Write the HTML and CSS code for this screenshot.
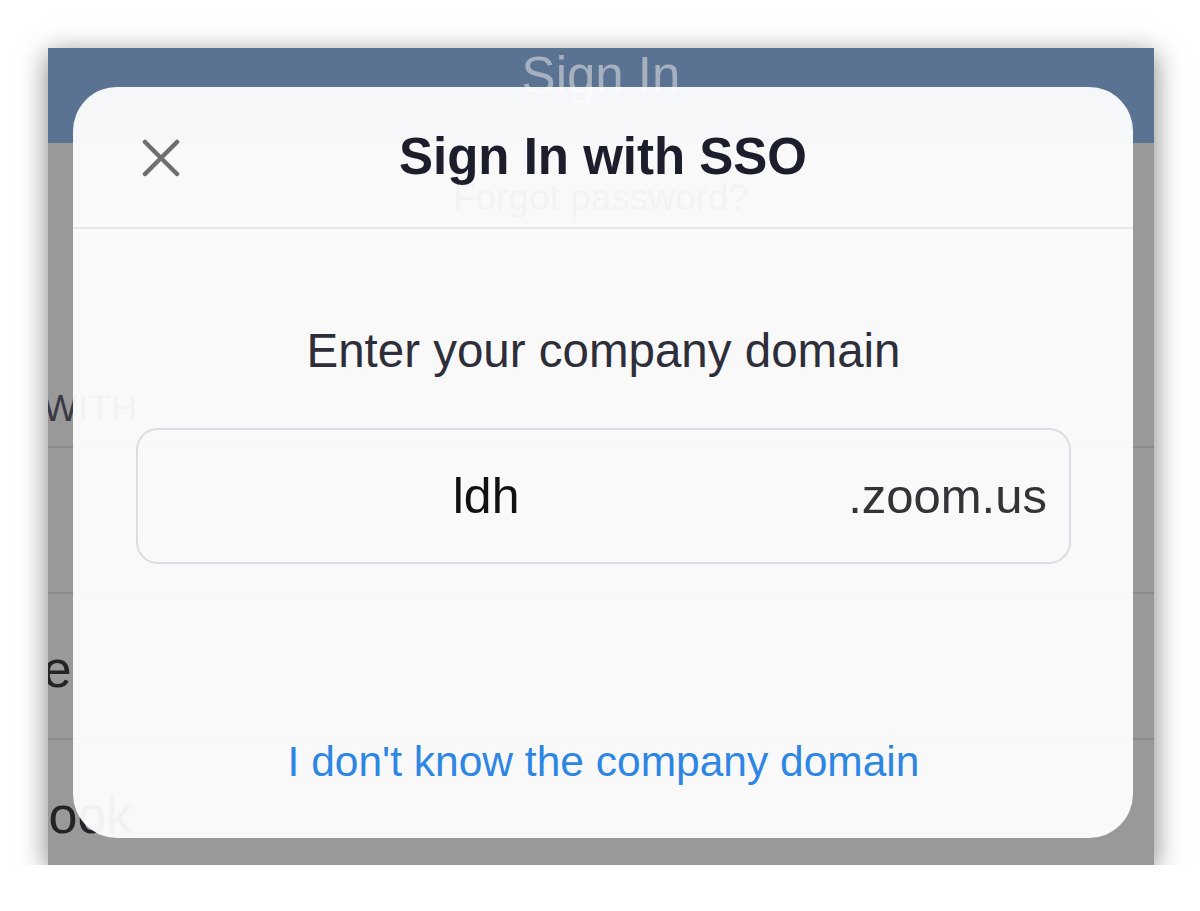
FILE: index.html
```html
<!DOCTYPE html>
<html lang="en">
<head>
<meta charset="utf-8">
<title>Sign In with SSO</title>
<link rel="stylesheet" href="styles.css">
</head>
<body>
<div class="shot">
  <div class="app">
    <header class="app-header"><span class="app-title">Sign In</span></header>
    <div class="app-body">
      <div class="forgot">Forgot password?</div>
      <div class="section-label">SIGN IN WITH</div>
      <ul class="options">
        <li class="option"><span>SSO</span></li>
        <li class="option"><span>Google</span></li>
        <li class="option"><span>Facebook</span></li>
      </ul>
    </div>
  </div>

  <div class="sheet">
    <div class="sheet-header">
      <button class="close" aria-label="Close">
        <svg width="38" height="38" viewBox="0 0 38 38" aria-hidden="true">
          <path d="M3 3 L35 35 M35 3 L3 35" stroke="#6f6f72" stroke-width="4.5" stroke-linecap="round" fill="none"/>
        </svg>
      </button>
      <h1 class="sheet-title">Sign In with SSO</h1>
      <span class="spacer"></span>
    </div>
    <div class="sheet-body">
      <p class="prompt">Enter your company domain</p>
      <div class="domain-field">
        <span class="domain-value">ldh</span>
        <span class="domain-suffix">.zoom.us</span>
      </div>
      <a class="help-link" href="#">I don't know the company domain</a>
    </div>
  </div>
</div>
</body>
</html>
```

FILE: styles.css
```css
* { box-sizing: border-box; }

html, body {
  margin: 0;
  padding: 0;
  background: #ffffff;
  font-family: "Liberation Sans", Arial, Helvetica, sans-serif;
}

.shot {
  position: relative;
  margin: 48px 0 0 48px;
  width: 1106px;
  height: 817px;
  overflow: hidden;
  background: #999999;
  box-shadow: 0 6px 26px rgba(0, 0, 0, 0.5);
}

/* underlying (dimmed) app screen */
.app {
  display: flex;
  flex-direction: column;
  height: 100%;
}

.app-header {
  flex: none;
  height: 95px;
  background: #5b7393;
  display: flex;
  justify-content: center;
  padding-top: 2px;
}

.app-title {
  font-size: 51px;
  line-height: 51px;
  color: #a6b0bf;
}

.app-body {
  flex: none;
  display: flex;
  flex-direction: column;
}

.forgot {
  flex: none;
  margin-top: 33px;
  text-align: center;
  font-size: 37px;
  line-height: 44px;
  color: #2a3a52;
}

.section-label {
  flex: none;
  margin: 167px 0 15px -153px;
  font-size: 37px;
  line-height: 44px;
  color: #3a3a46;
  white-space: nowrap;
}

.options {
  flex: none;
  list-style: none;
  margin: 0;
  padding: 0;
  border-top: 2px solid #8c8c8e;
}

.option {
  height: 146px;
  padding-top: 45px;
  padding-left: 0;
  margin-left: -144px;
  border-bottom: 2px solid #8c8c8e;
  font-size: 52px;
  line-height: 60px;
  color: #232328;
  white-space: nowrap;
}

/* modal sheet */
.sheet {
  position: absolute;
  left: 25px;
  top: 39px;
  width: 1060px;
  height: 751px;
  border-radius: 44px;
  background: rgba(255, 255, 255, 0.94);
  display: flex;
  flex-direction: column;
}

.sheet-header {
  height: 142px;
  flex: none;
  display: grid;
  grid-template-columns: 1fr auto 1fr;
  align-items: center;
  border-bottom: 2px solid #e6e7ec;
}

.close {
  justify-self: start;
  margin-left: 69px;
  margin-top: 2px;
  padding: 0;
  border: 0;
  background: none;
  width: 38px;
  height: 38px;
  display: flex;
}

.sheet-title {
  margin: 0;
  font-size: 51px;
  line-height: 60px;
  font-weight: 700;
  color: #1d1e2b;
  white-space: nowrap;
}

.sheet-body {
  flex: 1;
  display: flex;
  flex-direction: column;
  align-items: stretch;
  padding: 94px 62px 51px 63px;
}

.prompt {
  margin: 0;
  text-align: center;
  font-size: 47.5px;
  line-height: 56px;
  color: #2e2e3a;
}

.domain-field {
  flex: none;
  margin-top: 49px;
  height: 136px;
  border: 2px solid #dcdce3;
  border-radius: 22px;
  display: flex;
  align-items: center;
  padding: 0 22px 0 0;
}

.domain-value {
  flex: 1;
  text-align: center;
  padding-right: 14px;
  font-size: 50px;
  color: #111114;
}

.domain-suffix {
  font-size: 49px;
  color: #333338;
}

.help-link {
  margin-top: auto;
  text-align: center;
  font-size: 42.5px;
  line-height: 50px;
  color: #2e86e4;
  text-decoration: none;
}
```
